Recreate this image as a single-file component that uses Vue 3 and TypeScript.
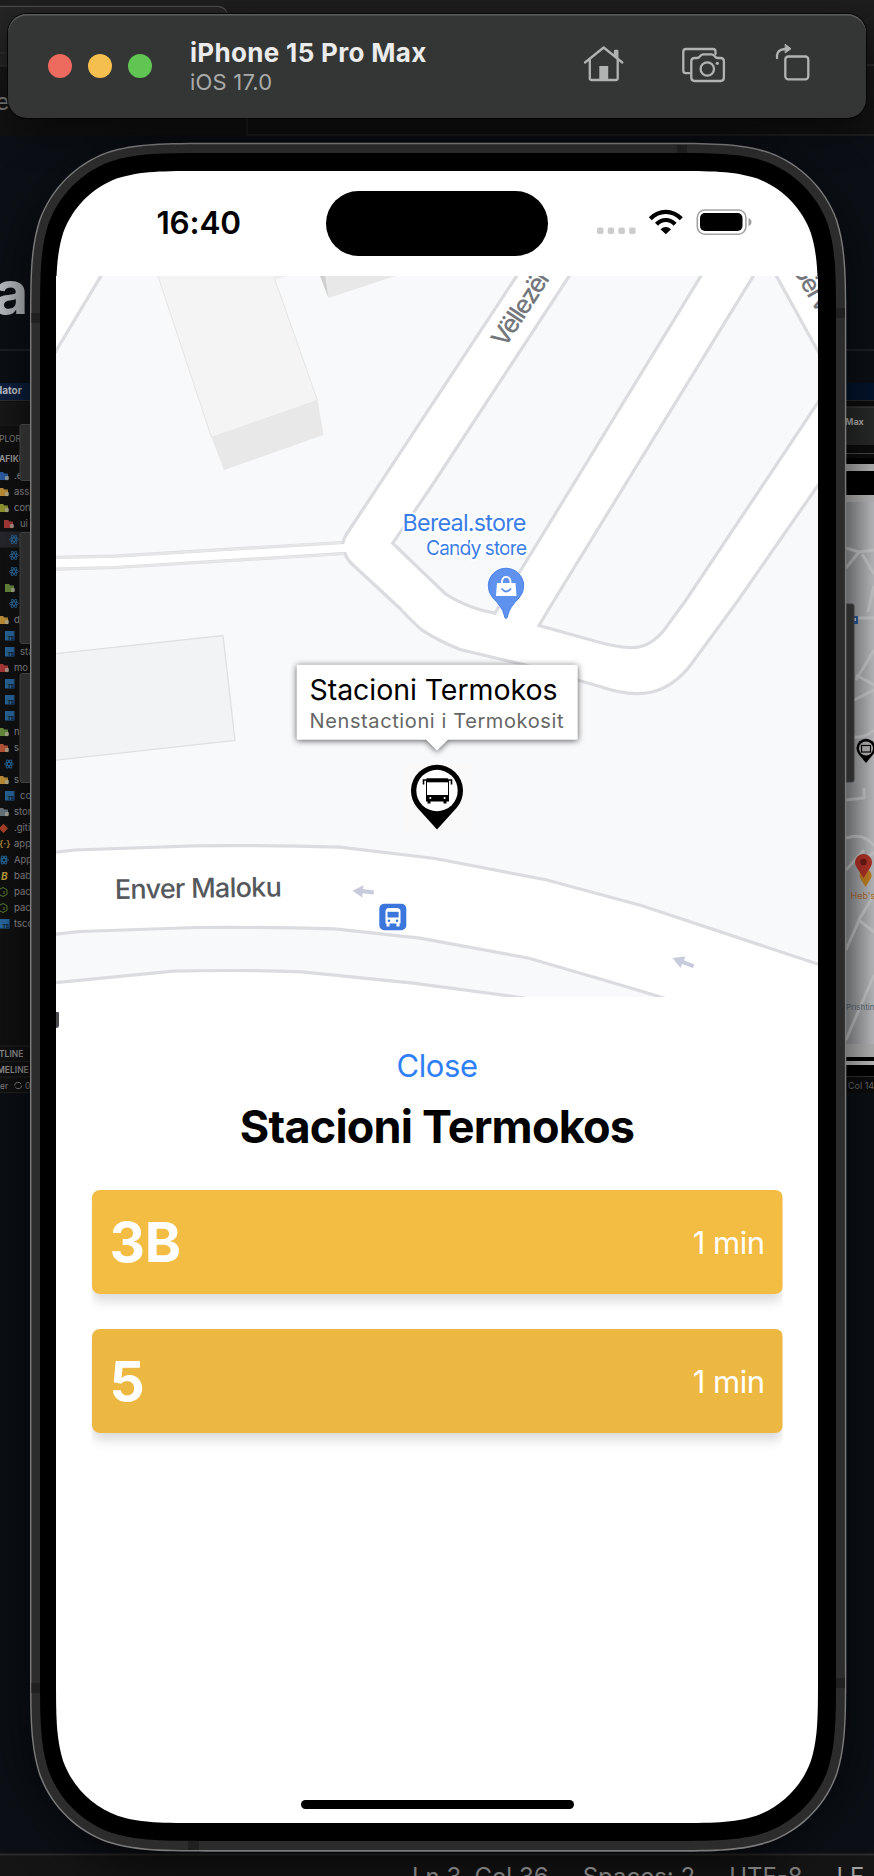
<script setup lang="ts">
interface Arrival { line: string; eta: string; tone: string }
interface TreeRow { y: number; x: number; label: string; color: string; kind: string; ix: number }

const arrivals: Arrival[] = [
  { line: '3B', eta: '1 min', tone: 'bright' },
  { line: '5', eta: '1 min', tone: 'muted' },
]

const tree: TreeRow[] = [
  { y: 576, x: 14, label: '.e', color: '#2f62ad', kind: 'folder', ix: -1 },
  { y: 592, x: 14, label: 'ass', color: '#c9973c', kind: 'folder', ix: -1 },
  { y: 608, x: 14, label: 'con', color: '#9aa035', kind: 'folder', ix: -1 },
  { y: 624, x: 20, label: 'ui', color: '#b23c3c', kind: 'folder', ix: 4 },
  { y: 639.5, x: 28, label: 's', color: '#2b74ad', kind: 'react', ix: 10 },
  { y: 655.5, x: 28, label: 's', color: '#2b74ad', kind: 'react', ix: 10 },
  { y: 671.5, x: 28, label: 's', color: '#2b74ad', kind: 'react', ix: 10 },
  { y: 688, x: 28, label: '', color: '#6e9440', kind: 'folder', ix: 5 },
  { y: 703.5, x: 28, label: 's', color: '#2b74ad', kind: 'react', ix: 10 },
  { y: 720, x: 14, label: 'd', color: '#c9973c', kind: 'folder', ix: -1 },
  { y: 736, x: 20, label: '', color: '#2b6ca8', kind: 'ts', ix: 5 },
  { y: 752, x: 20, label: 'sta', color: '#2b6ca8', kind: 'ts', ix: 5 },
  { y: 768, x: 14, label: 'mo', color: '#b23c3c', kind: 'folder', ix: -1 },
  { y: 784, x: 20, label: '', color: '#2b6ca8', kind: 'ts', ix: 5 },
  { y: 800, x: 20, label: '', color: '#2b6ca8', kind: 'ts', ix: 5 },
  { y: 816, x: 20, label: '', color: '#2b6ca8', kind: 'ts', ix: 5 },
  { y: 832, x: 14, label: 'n', color: '#6e9440', kind: 'folder', ix: -1 },
  { y: 848, x: 14, label: 's', color: '#c25a3a', kind: 'folder', ix: -1 },
  { y: 864, x: 28, label: 's', color: '#2b74ad', kind: 'react', ix: 5 },
  { y: 880, x: 14, label: 's', color: '#c9973c', kind: 'folder', ix: -1 },
  { y: 896, x: 20, label: 'co', color: '#2b6ca8', kind: 'ts', ix: 5 },
  { y: 912, x: 14, label: 'stor', color: '#6f7d86', kind: 'folder', ix: -1 },
  { y: 928, x: 14, label: '.giti', color: '#b8452c', kind: 'git', ix: 0 },
  { y: 944, x: 14, label: 'app', color: '#b58a35', kind: 'json', ix: 0 },
  { y: 960, x: 14, label: 'App', color: '#2b74ad', kind: 'react', ix: 0 },
  { y: 976, x: 14, label: 'bab', color: '#c9a63c', kind: 'babel', ix: 0 },
  { y: 992, x: 14, label: 'pac', color: '#5f8a3c', kind: 'node', ix: 0 },
  { y: 1008, x: 14, label: 'pac', color: '#5f8a3c', kind: 'node', ix: 0 },
  { y: 1024, x: 14, label: 'tsco', color: '#2b6ca8', kind: 'ts', ix: 0 },
]

/** Rectangle outline with continuous-curvature corners. */
function smoothRect(x: number, y: number, w: number, h: number, r: number): string {
  const edge = 1.528665 * r
  const k = [1.08849, 0.868407, 0.0749114, 0.631494, 0.372824, 0.16906].map(n => n * r)
  const [a, b, c, d, e, f] = k
  const R = x + w
  const B = y + h
  return [
    `M${x + edge} ${y}H${R - edge}`,
    `C${R - a} ${y} ${R - b} ${y} ${R - d} ${y + c}`,
    `C${R - e} ${y + f} ${R - f} ${y + e} ${R - c} ${y + d}`,
    `C${R} ${y + b} ${R} ${y + a} ${R} ${y + edge}V${B - edge}`,
    `C${R} ${B - a} ${R} ${B - b} ${R - c} ${B - d}`,
    `C${R - f} ${B - e} ${R - e} ${B - f} ${R - d} ${B - c}`,
    `C${R - b} ${B} ${R - a} ${B} ${R - edge} ${B}H${x + edge}`,
    `C${x + a} ${B} ${x + b} ${B} ${x + d} ${B - c}`,
    `C${x + e} ${B - f} ${x + f} ${B - e} ${x + c} ${B - d}`,
    `C${x} ${B - b} ${x} ${B - a} ${x} ${B - edge}V${y + edge}`,
    `C${x} ${y + a} ${x} ${y + b} ${x + c} ${y + d}`,
    `C${x + f} ${y + e} ${x + e} ${y + f} ${x + d} ${y + c}`,
    `C${x + b} ${y} ${x + a} ${y} ${x + edge} ${y}Z`,
  ].join('')
}

const rim = smoothRect(30, 142.8, 816.3, 1708.9, 122)
const band = smoothRect(31.4, 144.3, 813.5, 1705.8, 120.5)
const bezel = smoothRect(40, 153, 796, 1688, 112)
const glass = smoothRect(56, 171, 762, 1652, 97.5)
</script>

<template>
  <main class="desktop">
    <svg class="backdrop" viewBox="0 0 874 1876" width="874" height="1876" aria-hidden="true">
      <defs>
        <linearGradient id="topbar" x1="0" y1="0" x2="0" y2="1">
          <stop offset="0" stop-color="#1e1e1e" /><stop offset="1" stop-color="#111" />
        </linearGradient>
        <linearGradient id="mini" x1="0" y1="0" x2="1" y2="0">
          <stop offset="0" stop-color="#9fa1a4" /><stop offset="1" stop-color="#c3c4c7" />
        </linearGradient>
      </defs>
      <rect width="874" height="1876" fill="#0c1016" />
      <rect width="874" height="136" fill="url(#topbar)" />
      <path d="M0 6.500H218Q226 7 227 15" fill="none" stroke="#4a4a4a" stroke-width="1.500" />
      <path d="M0 7.500H218Q226 8 227 15V66H0Z" fill="#252525" />
      <path d="M0 53H30M0 66H30M860 65H874" stroke="#303030" stroke-width="1.500" />
      <path d="M247 118V135H874" fill="none" stroke="#242424" stroke-width="1.500" />
      <text x="-4.500" y="110" class="ui" font-size="24" fill="#7d7d7d">e</text>
      <text x="-6.500" y="314" class="ui" font-size="60" font-weight="700" fill="#c3c7cb">a</text>
      <path d="M0 350H874" stroke="#1f2226" stroke-width="2" />

      <rect y="383" width="60" height="17" fill="#0d2242" />
      <text x="-.5" y="394" class="ui" font-size="10" font-weight="700" fill="#d0d4da">lator</text>
      <rect y="400" width="60" height="693" fill="#121212" />
      <path d="M0 400.500H60" stroke="#333" />
      <rect y="402" width="60" height="22" fill="#191919" />
      <path d="M0 425H60M0 1046H40M0 1061.500H40M0 1077H40M0 1092.500H40" stroke="#242424" />
      <text x="-1" y="441.500" class="ui" font-size="8.500" fill="#8a8a8a">PLOR</text>
      <text x="-1" y="462" class="ui" font-size="8.500" font-weight="700" fill="#a5a5a5">AFIKU</text>
      <rect y="531.500" width="60" height="16" fill="#292a30" />
      <g transform="translate(0 -100)">
        <g v-for="row in tree" :key="row.y">
          <path v-if="row.kind === 'folder'" :transform="`translate(${row.ix} ${row.y - 4})`" d="M0 0H4L5.500 1.500H9V8H0Z" :fill="row.color" />
          <circle v-if="row.kind === 'folder'" :cx="row.ix + 8" :cy="row.y + 2" r="2.200" fill="#c9c6b4" opacity=".7" />
          <g v-else-if="row.kind === 'react'" :transform="`translate(${row.ix + 4} ${row.y})`" fill="none" :stroke="row.color" stroke-width=".9">
            <ellipse rx="4.500" ry="1.700" /><ellipse rx="4.500" ry="1.700" transform="rotate(60)" /><ellipse rx="4.500" ry="1.700" transform="rotate(120)" />
          </g>
          <g v-else-if="row.kind === 'ts'">
            <rect :x="row.ix" :y="row.y - 5" width="9.500" height="9.500" :fill="row.color" />
            <text :x="row.ix + 2.500" :y="row.y + 3.500" class="ui" font-size="5" font-weight="700" fill="#0e1c2a">TS</text>
          </g>
          <rect v-else-if="row.kind === 'git'" x="-3" y="-3" width="6.500" height="6.500" rx=".8" :transform="`translate(3.500 ${row.y}) rotate(45)`" :fill="row.color" />
          <text v-else-if="row.kind === 'json'" x="-1" :y="row.y + 3" class="ui" font-size="9" font-weight="700" :fill="row.color">{·}</text>
          <text v-else-if="row.kind === 'babel'" x="1" :y="row.y + 4" class="ui" font-size="10" font-style="italic" font-weight="700" :fill="row.color">B</text>
          <path v-else :transform="`translate(3 ${row.y})`" d="M0-4.500L4-2.300V2.300L0 4.500L-4 2.300V-2.300ZM1-1V2" fill="none" :stroke="row.color" />
          <text :x="row.x" :y="row.y + 3.200" class="ui" font-size="9.500" fill="#a0a0a0">{{ row.label }}</text>
        </g>
      </g>
      <text x="-1" y="1056.500" class="ui" font-size="8.500" font-weight="600" fill="#9b9b9b">TLINE</text>
      <text x="-3" y="1072.500" class="ui" font-size="8.500" font-weight="600" fill="#9b9b9b">MELINE</text>
      <text x="0" y="1088.500" class="ui" font-size="8.500" fill="#8a8a8a">er</text>
      <path d="M14.500 1085.500a3.500 3.500 0 0 1 6.500-1.500m.8 1.500a3.500 3.500 0 0 1-6.500 1.500" fill="none" stroke="#8a8a8a" />
      <text x="25" y="1088.500" class="ui" font-size="8.500" fill="#8a8a8a">0</text>

      <g transform="translate(846 0)">
        <rect y="383" width="28" height="17" fill="#04142e" />
        <rect y="400" width="28" height="693" fill="#0d0d0d" />
        <path d="M0 400.500H28" stroke="#2b2b2b" />
        <rect y="407" width="28" height="38" fill="#292b2a" />
        <path d="M0 407H28M0 453.500H28" stroke="#4b4b4b" />
        <text x="-1" y="424.500" class="ui" font-size="9" font-weight="700" fill="#b8b8b8">Max</text>
        <rect y="458" width="28" height="6" fill="#000" />
        <rect y="464" width="28" height="7" fill="#b9b9b9" />
        <rect y="471" width="28" height="24" fill="#000" />
        <rect y="495" width="28" height="549" fill="url(#mini)" />
        <rect y="495" width="28" height="7" fill="#bdbdbd" />
        <path d="M0 548L13 552L28 550M13 552L0 568M16 554L28 574M0 618H28M22 612L28 586M10 680L28 650M10 675L28 685M0 704L28 690M0 736Q18 740 28 730M0 800L18 798V788M0 838Q18 832 28 846M18 850L0 870M10 866L28 852M0 950L14 918L28 895M14 921L28 932M0 1040L28 975" fill="none" stroke="#cecfd0" stroke-width="3" />
        <rect x="4" y="616" width="8" height="8" fill="#2b5da9" /><rect x="6" y="618" width="4" height="3" fill="#c4cde0" />
        <path d="M20 763L12.500 754A9.500 9.500 0 1 1 27.500 754Z" fill="#000" /><circle cx="20" cy="748.500" r="7" fill="#bbb" /><rect x="15.500" y="745.500" width="9" height="6.500" fill="none" stroke="#000" stroke-width="1.200" />
        <path d="M19.500 887L14 878A6 6 0 1 1 25 878Z" fill="#c88425" />
        <path d="M17.500 878L11 868A8.500 8.500 0 1 1 24 868Z" fill="#b93529" /><circle cx="17.500" cy="862" r="3.200" fill="#701b16" />
        <text x="4.500" y="899" class="ui" font-size="9" fill="#b77230">Heb's</text>
        <text x="0" y="1010" class="ui" font-size="8" fill="#5d6b76">Prishtin</text>
        <rect y="1044" width="28" height="13" fill="#b9b9b9" />
        <rect y="1057" width="28" height="19" fill="#000" /><path d="M0 1063H28" stroke="#c4c4c4" stroke-width="4" />
        <path d="M0 1076.500H28" stroke="#333" />
        <text x="2" y="1088.500" class="ui" font-size="9" fill="#717171">Col 14</text>
      </g>

      <path d="M0 1854H874V1876H0Z" fill="#151515" />
      <path d="M0 1854.500H874" stroke="#2b2b2b" stroke-width="2" />
    </svg>

    <header class="toolbar">
      <div class="lights"><i class="red" /><i class="amber" /><i class="green" /></div>
      <div class="device">
        <strong>iPhone 15 Pro Max</strong>
        <small>iOS 17.0</small>
      </div>
      <svg class="tools" viewBox="576 39 240 54" width="240" height="54" fill="none" stroke="#b1b3b2" stroke-width="2.300" stroke-linecap="round" stroke-linejoin="round">
        <path d="M585 62.500L603.700 47.500L622.300 62.500M589.800 60V78Q589.800 80 591.800 80H615.700Q617.700 80 617.700 78V60M615 55V51H617.300V58" />
        <path d="M599.300 66H608.200V80H599.300Z" fill="#b1b3b2" stroke="none" />
        <path d="M689.500 73.200H686Q683.300 73.200 683.300 70.500V51.700Q683.300 49 686 49H713Q715.500 49 715.500 51.500V54" />
        <path d="M694.700 58H697Q698.700 58 699.800 56.500Q701.300 54.300 703 54.300H711.500Q713.500 54.300 715 56.500Q716 58 717.500 58H720.500Q723.900 58 723.900 61.500V77.500Q723.900 81 720.500 81H694.700Q691.300 81 691.300 77.500V61.500Q691.300 58 694.700 58Z" />
        <circle cx="707.300" cy="69" r="6.700" /><circle cx="717.300" cy="63.300" r="1.600" fill="#b1b3b2" stroke="none" />
        <rect x="785.300" y="56.500" width="23" height="22.800" rx="3" />
        <path d="M777 58V55.500Q777.500 49.500 785 49" /><path d="M785.500 44.500L791 48.700L785.500 52.700Z" fill="#b1b3b2" stroke-width="1" />
      </svg>
    </header>

    <section class="phone">
      <svg class="frame" viewBox="16 142 842 1710" width="842" height="1710" aria-hidden="true">
        <g fill="#2d2d2d" stroke="#3f3f3f">
          <rect x="20" y="424.500" width="14" height="56" rx="2" /><rect x="20" y="532.500" width="14" height="111" rx="2" /><rect x="20" y="673.500" width="14" height="109" rx="2" />
          <rect x="842" y="604" width="12" height="178" rx="2" />
        </g>
        <path :d="rim" fill="#7c7c7c" /><path :d="band" fill="#2c2c2c" />
        <path d="M677 145h10v9h-10zM31.500 313h9v10h-9zM836 308h9v10h-9zM188 1840h11v10h-11zM31.500 1683h9v10h-9zM836 1678h9v10h-9z" fill="#202020" />
        <path :d="bezel" fill="#000" /><path :d="glass" fill="#fff" />
      </svg>

      <div class="screen">
        <div class="status">
          <time>16:40</time>
          <div class="island" />
          <svg viewBox="594 203 162 38" width="162" height="38">
            <g fill="#ccc"><rect v-for="i in 4" :key="i" :x="586.300 + i * 10.700" y="227.600" width="6.500" height="6.500" rx="1.800" /></g>
            <g fill="none" stroke="#000" stroke-width="4.200">
              <path d="M650.300 218.800Q657 211.900 665.800 211.900T681.300 218.800" />
              <path d="M656.500 224.200Q660.500 220 665.800 220T675.100 224.200" />
            </g>
            <path d="M665.800 234.300L660.500 229.300Q665.800 224.800 671.100 229.300Z" />
            <rect x="697.300" y="210" width="48.600" height="24.200" rx="7.500" fill="none" stroke="#a3a3a3" stroke-width="1.600" />
            <rect x="700" y="213" width="42.500" height="18" rx="5" /><path d="M748.500 218Q751.500 219 751.500 222T748.500 226Z" fill="#a0a0a0" />
          </svg>
        </div>

        <svg class="map" viewBox="56 275.500 762 721.500" width="762" height="721.500">
          <rect x="56" y="275" width="762" height="722" fill="#fff" />
          <g fill="#f8f9fb" stroke="#dbdce0" stroke-width="3.200">
            <path d="M103 272L52 357V557L115 555.700L343 542Q344 537 349 530L519 272Z" />
            <path d="M571.500 272L434 482L392.700 542.700L445 593Q455 600 473 607Q484 611 495 612.700L520 571L703 272Z" />
            <path d="M755.500 272L554 600L539 625L600 642C637 652 649 647 663 631Q671 620 685.700 600L822 396V358L774.500 272Z" />
            <path d="M52 568.700L115 567L345 553Q347 559 352 563.500L400 608Q412 621 421.700 629.300Q438 640 460 649L527 665L600 686C640 700 668 694 691 664L738 600L822 479V965L642 905.300L546 879.300L435 858L340 846.700Q260 844.500 194 845.300L75 849.500L52 852Z" />
            <path d="M52 934L80 931L196 927Q270 926.500 335 928.300L420 937.700L529 957.700L619 984L672 1000H540L508.500 995.300L413 982.700L302 971.300Q235 969 173.500 970.700L52 982.500Z" />
          </g>
          <path d="M55 557L115 555.700L341 542M55 568.700L115 567L344 553.200" fill="none" stroke="#e7e7e7" stroke-width="2" />
          <path d="M52 653.500L223 635L235 740L52 760Z" fill="#f2f3f4" stroke="#dfe0e3" stroke-width="1.300" />
          <path d="M156.500 271L211.500 437L317.500 400L272 271Z" fill="#f4f4f4" stroke="#e5e5e5" />
          <path d="M211.500 437L317.500 400L323.700 434.500L224 469.500Z" fill="#e8e8e8" />
          <path d="M273.500 280L288 275H272Z" fill="#eee" />
          <path d="M320 275L328.500 297.500L397 275Z" fill="#e8e8e8" /><path d="M320 275L328.500 297.500L325 275Z" fill="#cfcfcf" />
          <text class="street" transform="translate(505 348) rotate(-57)" font-size="25.500" textLength="99">Vëllezërit</text>
          <text class="street" transform="translate(791 267) rotate(60)" font-size="25" textLength="88">Gërvalla</text>
          <text class="street dark" transform="translate(115 898.500) rotate(-.9)" font-size="27" textLength="167">Enver Maloku</text>
          <g fill="#c8cbdb">
            <path d="M352.500 890.300L363.500 884.700L363 888.500L374 890L373.600 894L362.700 892.800L362.300 897Z" />
            <path d="M672.500 957.500L685.500 956L683.800 959.800L694.500 964L693 967.500L682 963.500L680.500 967.500Z" />
          </g>
          <g class="poi">
            <text x="402.500" y="530" font-size="23.500" textLength="124">Bereal.store</text>
            <text x="426" y="554.500" font-size="19.500" textLength="101">Candy store</text>
          </g>
          <path d="M506 618Q504.500 618 504 614Q502.500 607 493 597.500A17.700 17.700 0 1 1 519 597.500Q509.500 607 508 614Q507.500 618 506 618Z" fill="#5f92ee" stroke="#4a82e6" />
          <path d="M497 582.500H515.500L516.500 595.500H496Z" fill="#fff" /><path d="M502 583V581Q502.500 576.300 506.200 576.300T510.500 581V583" fill="none" stroke="#fff" stroke-width="1.800" /><path d="M501.500 588Q506.200 594 511 588" fill="none" stroke="#5f92ee" stroke-width="1.800" />
          <rect x="379.300" y="903.300" width="27" height="26.500" rx="5" fill="#3a76dc" />
          <path d="M385.500 911Q385.500 907.500 389 907.500H397Q400.500 907.500 400.500 911V923H399.500V926H396.500V923H389.500V926H386.500V923H385.500Z" fill="#fff" /><path d="M387.500 911.300H398.600V917H387.500Z" fill="#3a76dc" /><circle cx="389" cy="920.200" r="1.300" fill="#3a76dc" /><circle cx="397" cy="920.200" r="1.300" fill="#3a76dc" />
          <rect x="402" y="762" width="70" height="69" fill="#f9f9f9" />
          <path d="M437 829L417.500 807.500A26 26 0 1 1 456.500 807.500Z" fill="#000" />
          <circle cx="437" cy="790" r="20.700" fill="#fff" />
          <path d="M427 777.700H447Q449 777.700 449 780V801H446.500V803H443.500V801H430.500V803H427.500V801H426V780Q426 777.700 427 777.700Z" fill="#000" /><path d="M427 781.800H448V794.500H427Z" fill="#fff" />
          <path d="M426 779.500H423.500V784M449 779.500H451.500V784" fill="none" stroke="#000" stroke-width="1.600" /><circle cx="430.300" cy="797.500" r="1" fill="#fff" /><circle cx="444.600" cy="797.500" r="1" fill="#fff" />
          <g class="callout">
            <path d="M298 664.300H576.500Q577.700 664.300 577.700 665.500V738Q577.700 739.300 576.500 739.300H448L437 750L426 739.300H298Q296.700 739.300 296.700 738V665.500Q296.700 664.300 298 664.300Z" fill="#fff" />
            <text x="309.500" y="699.700" font-size="28.500" textLength="248">Stacioni Termokos</text>
            <text class="sub" x="309.500" y="727" font-size="20" textLength="254">Nenstactioni i Termokosit</text>
          </g>
        </svg>

        <section class="sheet">
          <i class="peek" />
          <button class="close">Close</button>
          <h1>Stacioni Termokos</h1>
          <ul>
            <li v-for="a in arrivals" :key="a.line" :class="a.tone">
              <b>{{ a.line }}</b><span>{{ a.eta }}</span>
            </li>
          </ul>
        </section>
        <div class="home" />
      </div>
    </section>

    <footer class="editor-status"><span>Ln 3, Col 36</span><span>Spaces: 2</span><span>UTF-8</span><span class="eol">LF</span></footer>
  </main>
</template>

<style>
body { margin: 0; background: #0c1016; }
</style>

<style scoped>
.desktop { position: relative; box-sizing: border-box; width: 874px; height: 1876px; padding-top: 14px; overflow: hidden; font-family: Inter, "Liberation Sans", sans-serif; }
.backdrop { position: absolute; inset: 0; }
.ui, .map text { font-family: Inter, "Liberation Sans", sans-serif; }
.toolbar { position: relative; z-index: 2; display: flex; align-items: center; box-sizing: border-box; width: 858px; height: 104px; margin-left: 8px; padding: 0 50px 0 40px; border-radius: 19px; background: #343635; box-shadow: inset 0 1.5px 0 #5c5e5d, 0 0 0 1px #050505, 0 12px 34px rgba(0, 0, 0, .55); }
.lights { display: flex; gap: 16px; }
.lights i { width: 24px; height: 24px; border-radius: 50%; }
.red { background: #ed6a5e; }
.amber { background: #f5bf4f; }
.green { background: #61c554; }
.device { display: flex; flex-direction: column; margin-left: 38px; padding-top: 3px; line-height: 29.3px; white-space: nowrap; }
.device strong { font-size: 26px; font-weight: 700; letter-spacing: .32px; color: #ebebeb; }
.device small { font-size: 22px; letter-spacing: .2px; color: #a9abaa; }
.tools { flex: none; margin-left: auto; }
.phone { position: relative; width: 842px; height: 1710px; margin: 24px 0 0 16px; }
.phone::before { content: ""; position: absolute; inset: 2px 14px; border-radius: 130px; box-shadow: 0 10px 46px 8px rgba(0, 0, 0, .6); }
.frame { position: absolute; inset: 0; }
.screen { position: relative; display: flex; flex-direction: column; align-items: center; width: 762px; height: 1652px; margin-left: 40px; padding-top: 29px; }
.status { display: grid; grid-template-columns: 270px 222px 270px; align-items: start; width: 762px; height: 104.5px; }
.status time { margin: 36px 0 0 100.5px; font-size: 31.5px; font-weight: 600; line-height: 32px; letter-spacing: -.2px; }
.island { height: 65px; margin-top: 20px; border-radius: 33px; background: #000; }
.status svg { margin: 32px 0 0 46px; }
.map { display: block; flex: none; }
.street { font-weight: 500; fill: #74777c; }
.street.dark { fill: #55585d; }
.poi text { fill: #3b7de6; stroke: #fff; stroke-width: 4px; paint-order: stroke; stroke-linejoin: round; }
.callout path { filter: drop-shadow(0 1px 3px rgba(0, 0, 0, .65)); }
.callout text { fill: #000; }
.callout .sub { fill: #666; }
.sheet { position: relative; display: flex; flex-direction: column; align-items: center; box-sizing: border-box; width: 762px; flex: 1; padding-top: 51px; }
.peek { position: absolute; left: 0; top: 15px; width: 2.5px; height: 16px; border-radius: 0 3px 8px 0; background: #4a4c50; }
.close { padding: 0; border: 0; background: none; font: 400 31px/36px Inter, sans-serif; letter-spacing: -.4px; color: #2f7ff6; }
h1 { margin: 16px 0 36px; font-size: 45px; font-weight: 700; line-height: 54px; letter-spacing: -.8px; white-space: nowrap; }
ul { display: flex; flex-direction: column; gap: 35px; width: 691px; margin: 0; padding: 0; list-style: none; }
li { display: flex; align-items: center; justify-content: space-between; box-sizing: border-box; height: 104px; padding: 0 18px; border-radius: 8px; color: #fff; box-shadow: 0 8px 12px -1px rgba(0, 0, 0, .15); clip-path: inset(0 0 -30px 0); }
.bright { background: #f3bc43; }
.muted { background: #edb841; }
li b { font-size: 55px; font-weight: 700; letter-spacing: -.2px; }
li span { font-size: 31px; letter-spacing: -.5px; }
.home { width: 273px; height: 9px; margin-bottom: 14px; border-radius: 5px; background: #000; }
.editor-status { position: absolute; left: 412px; top: 1865px; display: flex; gap: 34px; font-size: 24px; line-height: 24px; white-space: nowrap; color: #7a7a7a; }
.eol { color: #a0a0a0; }
</style>
